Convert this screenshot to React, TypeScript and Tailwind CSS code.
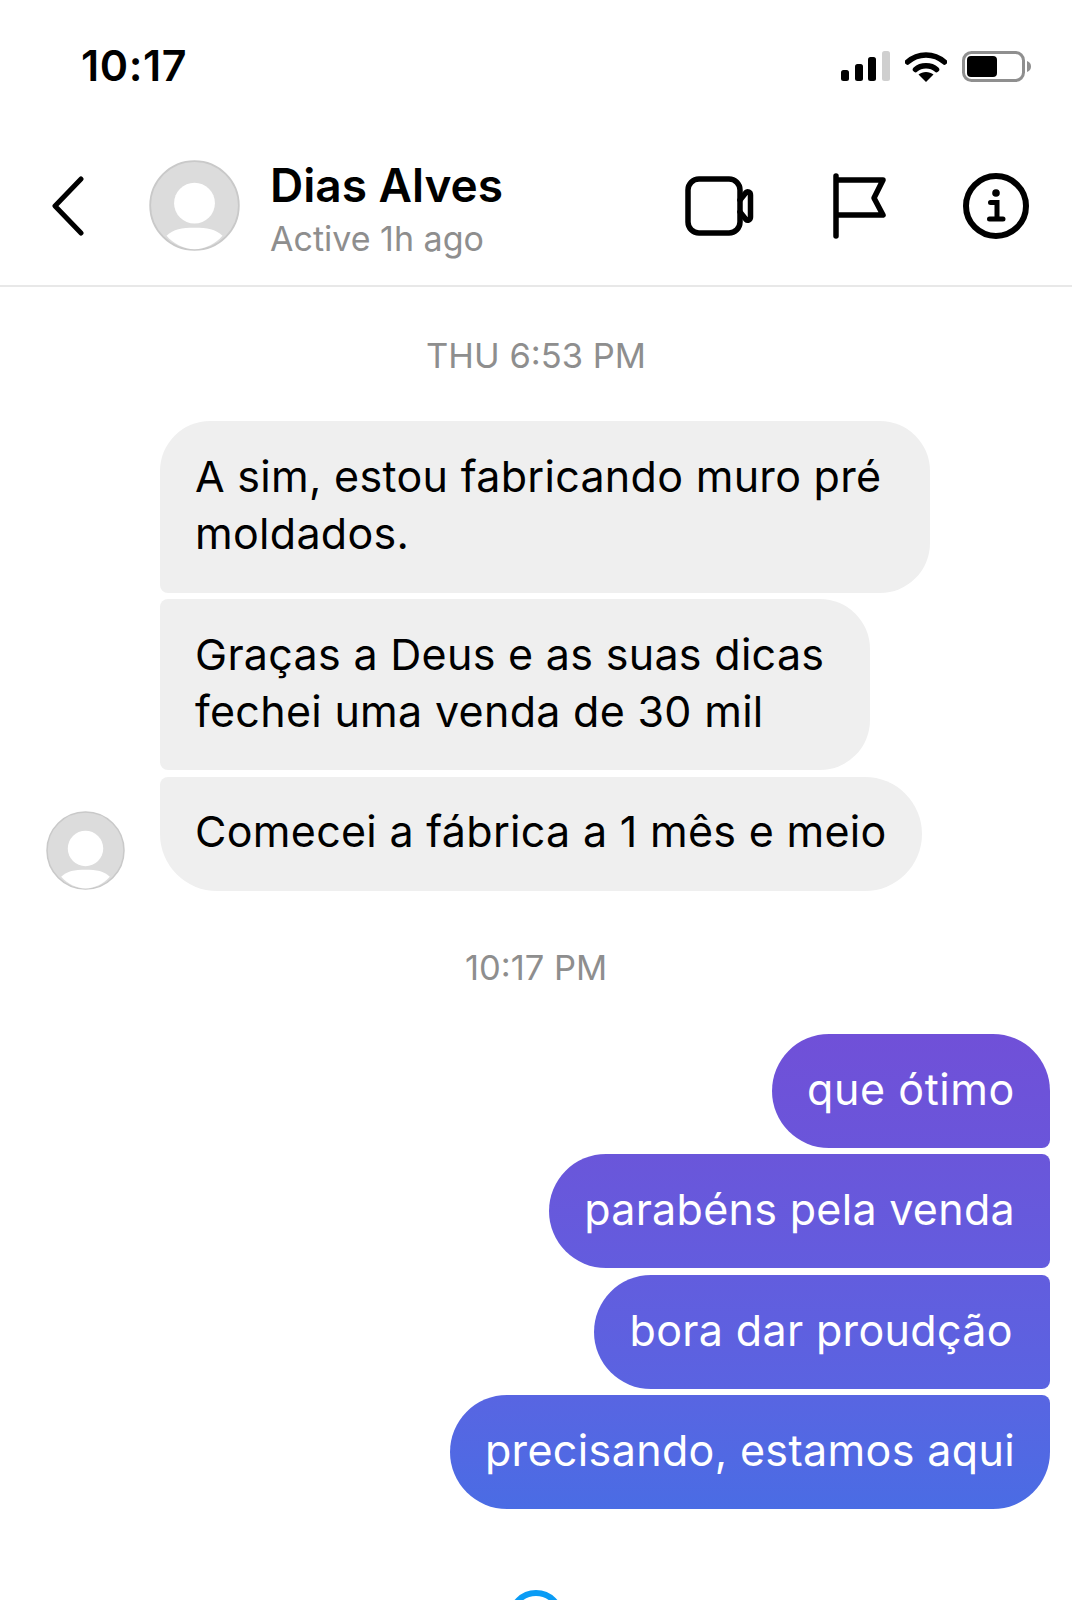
const font = "font-['Inter','Liberation_Sans',sans-serif]";

const Avatar = ({ size }: { size: string }) => (
  <svg viewBox="0 0 78 78" className={size}>
    <circle cx="39" cy="39" r="38" fill="#dcdcdc" stroke="#c9c9c9" strokeWidth="1.5" />
    <circle cx="39" cy="37" r="17.5" fill="#fff" />
    <path d="M15 65 C21 59 28 58 39 58 C50 58 57 59 63 65 C57 72 48 76.5 39 76.5 C30 76.5 21 72 15 65 Z" fill="#fff" />
  </svg>
);

const StatusIcons = () => (
  <div className="flex items-center">
    <svg width="49" height="31" viewBox="0 0 49 31">
      <rect x="0" y="19" width="8" height="11" rx="2.5" fill="#000" />
      <rect x="14" y="13" width="8" height="17" rx="2.5" fill="#000" />
      <rect x="27" y="6" width="8" height="24" rx="2.5" fill="#000" />
      <rect x="41" y="0" width="8" height="30" rx="2.5" fill="#cfcfcf" />
    </svg>
    <svg width="42" height="31" viewBox="0 0 42 31" className="ml-[15px]">
      <path d="M2.5 11 C13 1.5 29 1.5 39.500 11" fill="none" stroke="#000" strokeWidth="5.500" strokeLinecap="round" />
      <path d="M10.500 18.500 C16 13.500 26 13.500 31.500 18.500" fill="none" stroke="#000" strokeWidth="5.500" strokeLinecap="round" />
      <path d="M21 31 L13.500 23.500 C17.500 20 24.500 20 28.500 23.500 Z" fill="#000" />
    </svg>
    <svg width="70" height="31" viewBox="0 0 70 31" className="ml-[15px]">
      <rect x="1.500" y="1.500" width="60" height="28" rx="8" fill="#fff" stroke="#8f8f8f" strokeWidth="3" />
      <rect x="5" y="5" width="30" height="21" rx="4" fill="#000" />
      <path d="M65 10 C68 11 69 13 69 15.500 C69 18 68 20 65 21 Z" fill="#8f8f8f" />
    </svg>
  </div>
);

const Header = () => (
  <div className="flex h-[147px] items-center border-b-2 border-[#e8e8e8] pb-[14px]">
    <svg width="34" height="60" viewBox="0 0 34 60" className="ml-[51px]">
      <path d="M30 3 L4 30 L30 57" fill="none" stroke="#000" strokeWidth="5" strokeLinecap="round" strokeLinejoin="round" />
    </svg>
    <div className="ml-[64px]">
      <Avatar size="block w-[91px] h-[91px]" />
    </div>
    <div className="ml-[30px] flex w-[415px] flex-col pt-[5px]">
      <span className="text-[46px] leading-[56px] font-semibold text-black">Dias Alves</span>
      <span className="mt-[5px] text-[34px] leading-[42px] text-[#8e8e8e]">Active 1h ago</span>
    </div>
    <svg width="70" height="60" viewBox="0 0 70 60">
      <rect x="3" y="3" width="52" height="54" rx="11" fill="none" stroke="#000" strokeWidth="5.500" />
      <path d="M55 24 L61 16.500 C62.500 15 65.500 16 65.500 19 L65.500 41 C65.500 44 62.500 45 61 43.500 L55 36" fill="none" stroke="#000" strokeWidth="5.500" strokeLinejoin="round" strokeLinecap="round" />
    </svg>
    <svg width="55" height="66" viewBox="0 0 55 66" className="ml-[78px]">
      <path d="M3 3 L3 63" fill="none" stroke="#000" strokeWidth="5.500" strokeLinecap="round" />
      <path d="M3 7 L50 7 L41 25 L50 42 L3 42" fill="none" stroke="#000" strokeWidth="5.500" strokeLinejoin="round" />
    </svg>
    <svg width="66" height="66" viewBox="0 0 66 66" className="ml-[75px]">
      <circle cx="33" cy="33" r="30" fill="none" stroke="#000" strokeWidth="6" />
      <circle cx="33" cy="20" r="3.800" fill="#000" />
      <path d="M27.500 29.500 L34 29.500 L34 46 M26.500 46 L40 46" fill="none" stroke="#000" strokeWidth="5" strokeLinecap="round" />
    </svg>
  </div>
);

const Stamp = ({ text, className }: { text: string; className: string }) => (
  <div className={`text-center text-[34.5px] leading-[40px] text-[#8e8e8e] ${className}`}>{text}</div>
);

export default function App() {
  return (
    <div className={`h-[1600px] w-[1072px] overflow-hidden bg-white ${font}`}>
      {/* Status bar */}
      <div className="flex h-[140px] items-start justify-between pt-[41px] pl-[81px] pr-[40px]">
        <span className="text-[43px] leading-[48px] font-semibold tracking-[0.6px] text-black">10:17</span>
        <div className="pt-[10px]">
          <StatusIcons />
        </div>
      </div>

      <Header />

      {/* Received */}
      <Stamp text="THU 6:53 PM" className="mt-[49px]" />
      <div className="mt-[45px] flex flex-col items-start gap-[6px] pl-[160px] text-[43px] leading-[57px] tracking-[0.3px] text-black">
        <div className="rounded-tl-[50px] rounded-tr-[50px] rounded-br-[50px] rounded-bl-[8px] bg-[#efefef] px-[35px] pt-[27px] pb-[31px] w-[770px]">
          A sim, estou fabricando muro pré moldados.
        </div>
        <div className="rounded-tl-[8px] rounded-tr-[50px] rounded-br-[50px] rounded-bl-[8px] bg-[#efefef] px-[35px] pt-[27px] pb-[30px] w-[710px]">
          Graças a Deus e as suas dicas fechei uma venda de 30 mil
        </div>
        <div className="relative mt-[1px] rounded-tl-[8px] rounded-tr-[57px] rounded-br-[57px] rounded-bl-[57px] bg-[#efefef] px-[35px] pt-[26px] pb-[31px] whitespace-nowrap">
          Comecei a fábrica a 1 mês e meio
          <div className="absolute bottom-[1px] left-[-114px]">
            <Avatar size="block w-[79px] h-[79px]" />
          </div>
        </div>
      </div>

      {/* Sent */}
      <Stamp text="10:17 PM" className="mt-[57px]" />
      <div className="mt-[46px] flex flex-col items-end gap-[6.4px] pr-[22px] text-[43px] leading-[57px] text-white">
        <div className="rounded-tl-[57px] rounded-tr-[57px] rounded-br-[8px] rounded-bl-[57px] bg-gradient-to-b from-[#7050d8] to-[#6a55da] px-[35px] pt-[27px] pb-[30px] tracking-[0.6px]">
          que ótimo
        </div>
        <div className="rounded-tl-[57px] rounded-tr-[8px] rounded-br-[8px] rounded-bl-[57px] bg-gradient-to-b from-[#6a56da] to-[#635cde] px-[35px] pt-[27px] pb-[30px] tracking-[0.3px]">
          parabéns pela venda
        </div>
        <div className="rounded-tl-[57px] rounded-tr-[8px] rounded-br-[8px] rounded-bl-[57px] bg-gradient-to-b from-[#625dde] to-[#5a63e1] pl-[35px] pr-[37px] pt-[27px] pb-[30px] tracking-[0.35px]">
          bora dar proudção
        </div>
        <div className="rounded-tl-[57px] rounded-tr-[8px] rounded-br-[57px] rounded-bl-[57px] bg-gradient-to-b from-[#5865e2] to-[#4a6ce4] px-[35px] pt-[27px] pb-[30px] tracking-[0.36px]">
          precisando, estamos aqui
        </div>
      </div>

      {/* Cut-off circle at the bottom edge */}
      <div className="mt-[81px] ml-[508px] h-[56px] w-[56px] rounded-full border-[6px] border-[#0a9cf5]" />
    </div>
  );
}
